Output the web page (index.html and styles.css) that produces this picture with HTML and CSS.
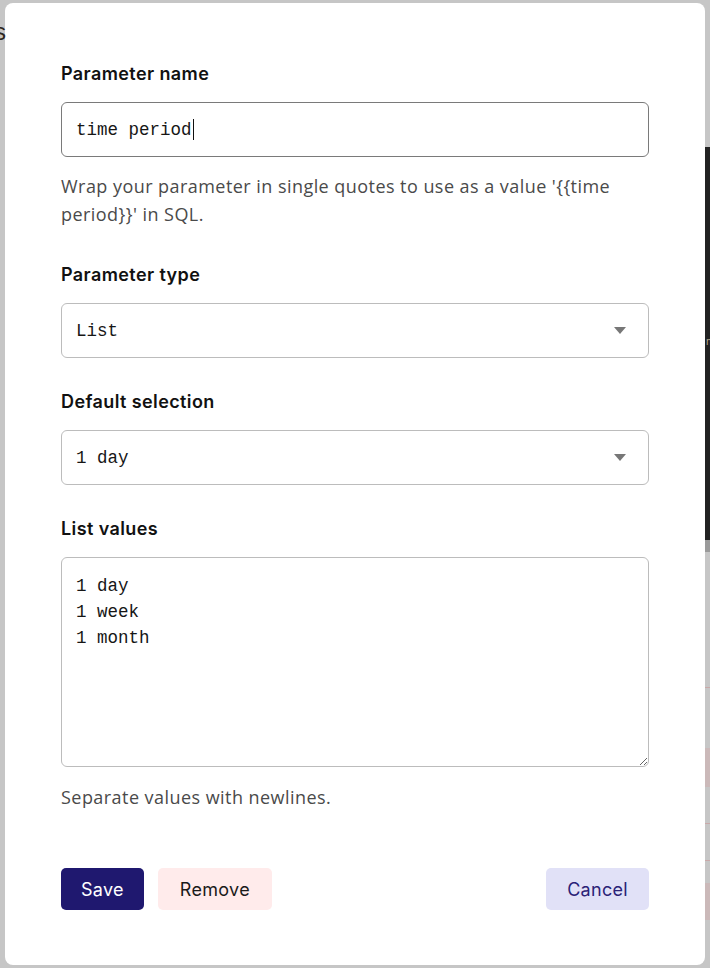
FILE: index.html
```html
<!DOCTYPE html>
<html>
<head>
<meta charset="utf-8">
<link rel="stylesheet" href="styles.css">
</head>
<body>
<div class="backdrop">
  <span class="bg-letter">s</span>
  <div class="bg-strip">
    <div class="strip-dark"><span class="strip-glyph">n</span></div>
    <div class="strip-line"></div>
    <div class="strip-rest">
      <div class="pink-line l1"></div>
      <div class="pink-block b1"></div>
      <div class="pink-line l2"></div>
      <div class="pink-line l3"></div>
      <div class="pink-block b2"></div>
    </div>
  </div>
  <div class="modal">
    <div class="field">
      <div class="label">Parameter name</div>
      <div class="input focused"><span class="value">time period</span><span class="caret"></span></div>
      <p class="help help-first">Wrap your parameter in single quotes to use as a value '{{time period}}' in SQL.</p>
    </div>
    <div class="field">
      <div class="label">Parameter type</div>
      <div class="input select"><span class="value">List</span><span class="arrow"></span></div>
    </div>
    <div class="field">
      <div class="label">Default selection</div>
      <div class="input select"><span class="value">1 day</span><span class="arrow"></span></div>
    </div>
    <div class="field">
      <div class="label">List values</div>
      <textarea class="textarea">1 day
1 week
1 month</textarea>
      <p class="help help-small">Separate values with newlines.</p>
    </div>
    <div class="actions">
      <button class="btn btn-save">Save</button>
      <button class="btn btn-remove">Remove</button>
      <span class="spacer"></span>
      <button class="btn btn-cancel">Cancel</button>
    </div>
  </div>
</div>
</body>
</html>
```

FILE: styles.css
```css
* { box-sizing: border-box; }
html, body {
  margin: 0;
  padding: 0;
}
body {
  background: #c6c6c6;
  width: 710px;
  height: 968px;
  overflow: hidden;
  font-family: Inter, "Liberation Sans", sans-serif;
}
.backdrop {
  position: relative;
  width: 710px;
  height: 968px;
  padding: 3px 5px 0 5px;
}
.bg-letter {
  position: absolute;
  left: -6px;
  top: 18px;
  font-size: 24px;
  line-height: 28px;
  color: #2e2620;
  font-family: "Liberation Sans", sans-serif;
}
.bg-strip {
  position: absolute;
  left: 705px;
  top: 147px;
  width: 5px;
  height: 821px;
  display: flex;
  flex-direction: column;
}
.strip-dark {
  height: 393px;
  background: #222222;
  position: relative;
}
.strip-glyph {
  position: absolute;
  left: 1px;
  top: 188px;
  font-size: 10px;
  line-height: 12px;
  color: #b9ab8e;
}
.strip-line {
  height: 12px;
  background: #9a9a9a;
}
.strip-rest {
  flex: 1;
  position: relative;
}
.pink-line {
  position: absolute;
  left: 0;
  width: 5px;
  height: 1px;
  background: #c9a9a9;
}
.pink-block {
  position: absolute;
  left: 0;
  width: 5px;
  background: #cbb9b9;
}
.l1 { top: 135px; }
.b1 { top: 196px; height: 39px; }
.l2 { top: 271px; }
.l3 { top: 308px; }
.b2 { top: 331px; height: 37px; }

.modal {
  width: 700px;
  height: 962px;
  background: #ffffff;
  border-radius: 8px;
  padding: 59px 56px 0 56px;
  display: flex;
  flex-direction: column;
}
.field {
  margin-bottom: 32px;
}
.label {
  font-size: 18px;
  line-height: 24px;
  font-weight: 600;
  letter-spacing: 0.4px;
  color: #111111;
  margin-bottom: 16px;
}
.input {
  height: 55px;
  border: 1px solid #bcbcbc;
  border-radius: 6px;
  display: flex;
  align-items: center;
  padding: 0 14px;
  font-family: "Liberation Mono", monospace;
  font-size: 17.5px;
  color: #161616;
}
.input.focused {
  border-color: #7a7a7a;
}
.caret {
  display: inline-block;
  width: 1px;
  height: 21px;
  background: #111;
  margin-left: 1px;
}
.select {
  justify-content: space-between;
  padding-right: 22px;
}
.arrow {
  width: 0;
  height: 0;
  border-left: 6.5px solid transparent;
  border-right: 6.5px solid transparent;
  border-top: 7px solid #777777;
}
.help {
  margin: 15px 0 2px 0;
  font-family: "Open Sans", "Liberation Sans", sans-serif;
  font-size: 18px;
  line-height: 28px;
  color: #4a4a4a;
  letter-spacing: 0.45px;
}
.help-first {
  margin-bottom: 3px;
}
.help-small {
  margin-top: 16px;
}
.textarea {
  display: block;
  width: 100%;
  height: 210px;
  border: 1px solid #bcbcbc;
  border-radius: 6px;
  padding: 15px 14px;
  font-family: "Liberation Mono", monospace;
  font-size: 17.5px;
  line-height: 26px;
  color: #161616;
  background: #fff;
  resize: vertical;
  outline: none;
  margin: 0;
}
.actions {
  display: flex;
  align-items: center;
  gap: 14px;
  margin-top: 23px;
}
.spacer { flex: 1; }
.btn {
  height: 42px;
  border: none;
  border-radius: 5px;
  font-family: Inter, "Liberation Sans", sans-serif;
  font-size: 18px;
  letter-spacing: 0.3px;
  padding: 0 20px;
  cursor: pointer;
}
.btn-save {
  background: #1f186f;
  color: #ffffff;
}
.btn-remove {
  background: #ffebeb;
  color: #1a1a1a;
  padding: 0 22px;
}
.btn-cancel {
  background: #e1e1f7;
  color: #2b2277;
  padding: 0 21px;
}
```
